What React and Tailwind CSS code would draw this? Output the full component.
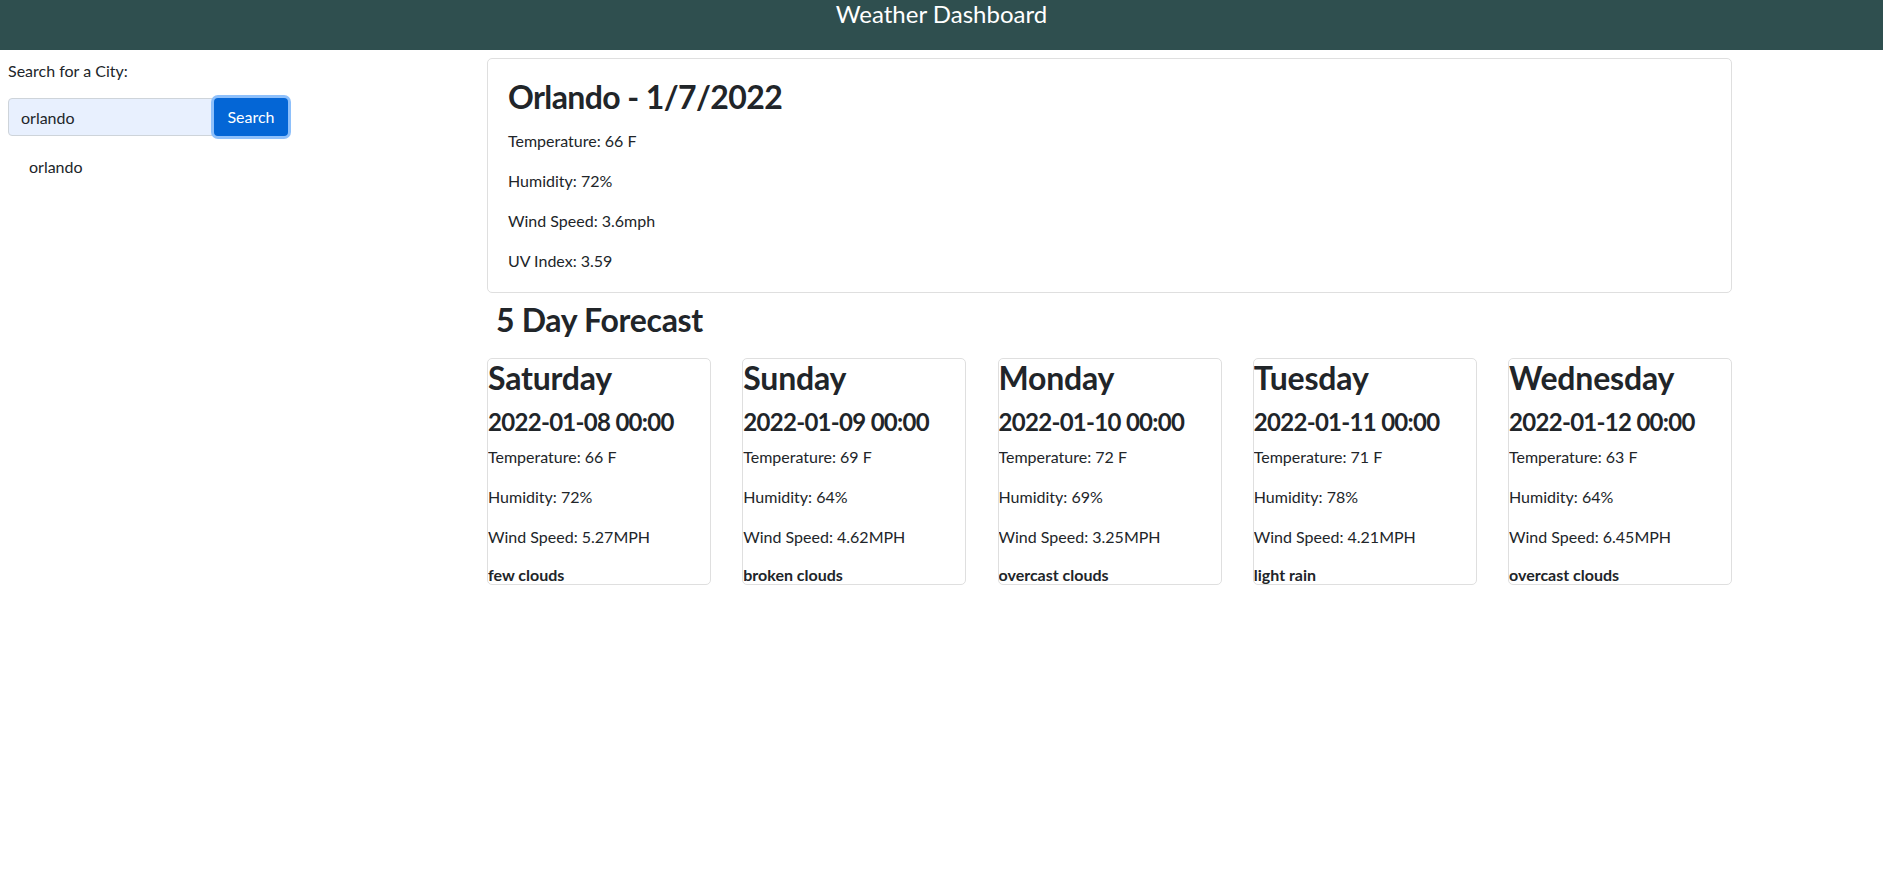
// Weather Dashboard - recherche de ville, météo du jour et prévisions sur 5 jours
import React from 'react';

const current = {
  city: 'Orlando',
  date: '1/7/2022',
  temp: '66 F',
  humidity: '72%',
  wind: '3.6mph',
  uv: '3.59',
};

const forecast = [
  { day: 'Saturday', date: '2022-01-08 00:00', temp: '66 F', humidity: '72%', wind: '5.27MPH', desc: 'few clouds' },
  { day: 'Sunday', date: '2022-01-09 00:00', temp: '69 F', humidity: '64%', wind: '4.62MPH', desc: 'broken clouds' },
  { day: 'Monday', date: '2022-01-10 00:00', temp: '72 F', humidity: '69%', wind: '3.25MPH', desc: 'overcast clouds' },
  { day: 'Tuesday', date: '2022-01-11 00:00', temp: '71 F', humidity: '78%', wind: '4.21MPH', desc: 'light rain' },
  { day: 'Wednesday', date: '2022-01-12 00:00', temp: '63 F', humidity: '64%', wind: '6.45MPH', desc: 'overcast clouds' },
];

function ForecastCard({ item }) {
  return (
    <div className="w-[224px] border border-[#dfdfdf] rounded-[5px] overflow-hidden">
      <h2 className="text-[32px] leading-[1.2] font-bold tracking-[-0.2px] mb-[11px]">{item.day}</h2>
      <h4 className="text-[24px] leading-[1.2] font-bold tracking-[-0.7px] mb-2">{item.date}</h4>
      <p className="mb-4">Temperature: {item.temp}</p>
      <p className="mb-4">Humidity: {item.humidity}</p>
      <p className="mb-4">Wind Speed: {item.wind}</p>
      <h6 className="text-[16px] leading-[1.2] font-bold">{item.desc}</h6>
    </div>
  );
}

export default function App() {
  return (
    <div className="min-h-screen bg-white text-[#212529] text-[16px] leading-[1.5] font-['Lato','Liberation_Sans',sans-serif]">
      {/* Header */}
      <header className="h-[50px] bg-[#2f4f4f] text-white text-center">
        <h1 className="text-[24px] leading-[1.2] font-normal">Weather Dashboard</h1>
      </header>

      <div className="flex pt-[8px]">
        {/* Recherche */}
        <aside className="w-[487px] shrink-0 pl-2">
          <p className="mt-[1px] mb-[15px]">Search for a City:</p>
          <div className="flex h-[38px]">
            <input
              type="text"
              defaultValue="orlando"
              className="w-[206px] h-[38px] px-3 bg-[#e8f0fe] border border-[#ced4da] rounded-l-[4px] text-[#212529] focus:outline-none"
              aria-label="City"
            />
            <button className="w-[74px] h-[38px] bg-[#0466d6] text-white rounded-[4px] shadow-[0_0_0_3px_#8ec0fb] relative">
              Search
            </button>
          </div>
          <ul className="mt-[19px] pl-[21px]">
            <li>orlando</li>
          </ul>
        </aside>

        {/* Météo */}
        <main className="w-[1245px] shrink-0">
          <div className="border border-[#dfdfdf] rounded-[5px] pt-[19px] px-[20px] pb-[3px]">
            <h2 className="text-[32px] leading-[1.2] font-bold tracking-[-0.6px] mb-[13px]">
              {current.city} - {current.date}
            </h2>
            <p className="mb-4">Temperature: {current.temp}</p>
            <p className="mb-4">Humidity: {current.humidity}</p>
            <p className="mb-4">Wind Speed: {current.wind}</p>
            <p className="mb-4">UV Index: {current.uv}</p>
          </div>

          <h2 className="mt-2 mb-[18px] pl-[9px] text-[32px] leading-[1.2] font-bold tracking-[-0.3px]">5 Day Forecast</h2>

          <div className="flex justify-between">
            {forecast.map((item) => (
              <ForecastCard key={item.day} item={item} />
            ))}
          </div>
        </main>
      </div>
    </div>
  );
}
